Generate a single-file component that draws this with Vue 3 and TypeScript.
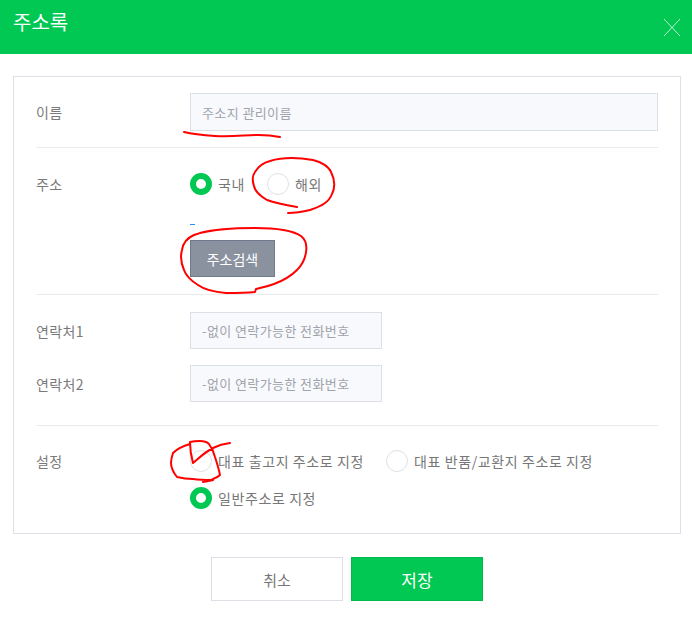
<script setup lang="ts">
interface Opt { label: string; on: boolean }
const countryOpts: Opt[] = [
  { label: '국내', on: true },
  { label: '해외', on: false },
]
const settingOpts: Opt[] = [
  { label: '대표 출고지 주소로 지정', on: false },
  { label: '대표 반품/교환지 주소로 지정', on: false },
  { label: '일반주소로 지정', on: true },
]
const marks: string[] = [
  'M184 132 C192 134 200 135 215 136 C233 137 245 135 258 135 C268 135 275 136 280 137',
  'M297 207 C285 205 275 203 267 200 C260 196 255 192 254 186 C252 180 252 176 255 172 C258 167 262 163 270 161 C280 158 295 157 313 160 C322 162 329 167 331 172 C335 180 335 188 332 194 C329 202 322 206 310 210 C302 212 295 213 288 213',
  'M200 233 C215 229 240 228 255 228 C275 228 292 230 301 236 C306 240 307 246 306 252 C305 260 302 265 297 270 C291 276 285 280 274 284 C266 287 260 288 256 289 L255 292 C245 293 235 293 226 293 C214 292 205 290 198 285 C190 280 186 276 184 270 C181 263 180 257 182 250 C183 243 187 238 194 235 C204 231 215 230 227 229',
  'M230 443 C222 444 217 446 213 448 C205 452 199 458 193 463 C191 456 190 449 190 442 C194 441 197 441 200 441 C204 441 207 442 209 444 C212 448 214 453 215 457 C217 463 219 470 220 475 C218 477 216 478 213 479 C210 481 206 482 203 482 C206 481 210 481 213 480 C206 480 200 480 193 479 C187 479 181 478 177 477 C173 472 171 468 171 463 C171 459 172 456 173 453 C177 449 183 446 190 444',
]
</script>

<template>
  <div class="page">
    <header class="head">
      <h1 class="title">주소록</h1>
      <svg class="close" width="18" height="19" viewBox="0 0 18 19" aria-label="닫기">
        <path d="M1 1 L17 18 M17 1 L1 18" stroke="#fff" stroke-opacity=".75" stroke-width="1" fill="none" />
      </svg>
    </header>

    <main class="box">
      <section class="row row-name">
        <div class="label">이름</div>
        <input class="field wide" placeholder="주소지 관리이름" />
      </section>

      <section class="row row-addr">
        <div class="label label-radio">주소</div>
        <div class="col">
          <div class="radios">
            <label v-for="o in countryOpts" :key="o.label" class="opt">
              <span class="radio" :class="{ on: o.on }"></span>
              <span class="opt-text">{{ o.label }}</span>
            </label>
          </div>
          <span class="dash"></span>
          <button class="search" type="button">주소검색</button>
        </div>
      </section>

      <section class="row row-contact">
        <div class="contact">
          <div class="label">연락처1</div>
          <input class="field short" placeholder="-없이 연락가능한 전화번호" />
        </div>
        <div class="contact">
          <div class="label">연락처2</div>
          <input class="field short" placeholder="-없이 연락가능한 전화번호" />
        </div>
      </section>

      <section class="row row-set">
        <div class="label label-radio">설정</div>
        <div class="radios set">
          <label v-for="o in settingOpts" :key="o.label" class="opt">
            <span class="radio" :class="{ on: o.on }"></span>
            <span class="opt-text">{{ o.label }}</span>
          </label>
        </div>
      </section>
    </main>

    <footer class="foot">
      <button class="btn cancel" type="button">취소</button>
      <button class="btn save" type="button">저장</button>
    </footer>

    <svg class="marks" width="692" height="622" viewBox="0 0 692 622">
      <path v-for="(d, i) in marks" :key="i" :d="d" fill="none" stroke="#f00" stroke-width="2" stroke-linecap="round" stroke-linejoin="round" />
    </svg>
  </div>
</template>

<style scoped>
.page {
  position: relative;
  width: 692px;
  height: 622px;
  overflow: hidden;
  background: #fff;
  font-family: "Noto Sans CJK KR", "Noto Sans", sans-serif;
  font-size: 14px;
  color: #777;
}
.head {
  height: 54px;
  background: #00c853;
  display: flex;
  align-items: center;
  justify-content: space-between;
  padding: 0 11px 0 13px;
  box-sizing: border-box;
}
.title {
  margin: 0 0 11px;
  font-size: 20px;
  font-weight: 400;
  color: #fff;
}
.box {
  margin: 22px 11px 0 13px;
  height: 458px;
  box-sizing: border-box;
  border: 1px solid #dcdfe6;
  padding: 0 22px;
}
.row {
  display: flex;
  border-bottom: 1px solid #e9ebef;
}
.row:last-child { border-bottom: 0; }
.row-name { padding: 16px 0; align-items: center; height: 71px; box-sizing: border-box; }
.row-addr { padding: 25px 0 0; height: 147px; box-sizing: border-box; }
.row-contact { flex-direction: column; gap: 16px; padding: 17px 0 22px; height: 131px; box-sizing: border-box; }
.row-set { padding: 24px 0 0; }
.label {
  width: 154px;
  flex: none;
  line-height: 22px;
  color: #7a7a7a;
  letter-spacing: .4px;
}
.label-radio { height: 22px; }
.col { display: flex; flex-direction: column; align-items: flex-start; }
.contact { display: flex; align-items: center; }
.field {
  height: 38px;
  box-sizing: border-box;
  border: 1px solid #dcdfe6;
  background: #f8f9fd;
  padding: 0 11px;
  font: inherit;
  font-size: 13px;
  letter-spacing: .4px;
  outline: none;
  border-radius: 0;
}
.field::placeholder { color: #a0a3aa; opacity: 1; }
.wide { width: 468px; }
.short { width: 192px; height: 37px; }
.radios { display: flex; flex-wrap: wrap; column-gap: 22px; row-gap: 15px; }
.opt { display: flex; align-items: center; gap: 6px; height: 22px; }
.radio {
  width: 22px;
  height: 22px;
  box-sizing: border-box;
  border: 1px solid #dfe1e5;
  border-radius: 50%;
  background: #fff;
  flex: none;
}
.radio.on { border: 6px solid #00c853; }
.opt-text { color: #777; line-height: 22px; letter-spacing: .6px; }
.dash {
  width: 5px;
  height: 1px;
  margin: 29px 0 15px;
  background: #1e90ff;
}
.search {
  width: 85px;
  height: 37px;
  box-sizing: border-box;
  border: 1px solid #6f7a8c;
  background: #8a92a0;
  color: #fff;
  font: inherit;
  font-size: 14px;
  font-weight: 400;
  padding: 0;
}
.set { width: 468px; }
.foot {
  display: flex;
  justify-content: center;
  gap: 8px;
  margin-top: 23px;
  padding-left: 2px;
}
.btn {
  width: 132px;
  height: 44px;
  box-sizing: border-box;
  font: inherit;
  padding: 0;
}
.cancel { background: #fff; border: 1px solid #dcdfe6; color: #777; font-size: 15px; }
.save { background: #00c853; border: 1px solid #00b84c; color: #fff; font-size: 17px; }
.marks {
  position: absolute;
  left: 0;
  top: 0;
  pointer-events: none;
}
</style>
